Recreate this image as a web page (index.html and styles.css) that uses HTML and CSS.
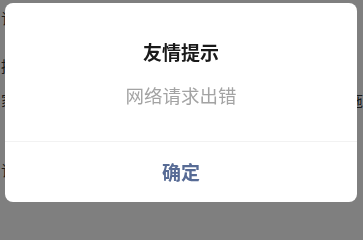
FILE: index.html
```html
<!DOCTYPE html>
<html lang="zh-CN">
<head>
<meta charset="utf-8">
<link rel="stylesheet" href="styles.css">
</head>
<body>
<div class="page">
  <div class="row r1"><span>订单</span></div>
  <div class="row r2"><span>提交</span></div>
  <div class="row r3"><span>家居</span><span class="right">拖</span></div>
  <div class="row r4"><span>订单</span></div>
</div>
<div class="mask"></div>
<div class="dialog">
  <div class="dialog-body">
    <div class="dialog-title">友情提示</div>
    <div class="dialog-msg">网络请求出错</div>
  </div>
  <div class="dialog-foot">
    <button class="dialog-btn">确定</button>
  </div>
</div>
</body>
</html>
```
FILE: styles.css
```css
html, body {
  margin: 0;
  padding: 0;
  width: 363px;
  height: 209px;
  overflow: hidden;
  background: #fff;
  font-family: "Noto Sans CJK SC", "Noto Sans", sans-serif;
}
.page {
  display: flex;
  flex-direction: column;
  padding-left: 1px;
  color: #333;
  font-size: 15px;
  line-height: 15px;
}
.row {
  display: flex;
  justify-content: space-between;
}
.r1 { margin-top: 10px; }
.r2 { margin-top: 33px; }
.r3 { margin-top: 19px; }
.r4 { margin-top: 55px; }
.mask {
  position: fixed;
  inset: 0;
  background: rgba(0, 0, 0, 0.5);
}
.dialog {
  position: fixed;
  left: 5px;
  top: 3px;
  width: 352px;
  height: 199px;
  background: #fff;
  border-radius: 8px;
  display: flex;
  flex-direction: column;
  overflow: hidden;
}
.dialog-body {
  height: 139px;
  box-sizing: border-box;
  padding-top: 37px;
  display: flex;
  flex-direction: column;
  align-items: center;
  border-bottom: 1px solid #f2f2f2;
}
.dialog-title {
  font-size: 19px;
  line-height: 24px;
  font-weight: 700;
  color: #1a1a1a;
}
.dialog-msg {
  margin-top: 19px;
  font-size: 18.5px;
  line-height: 24px;
  color: #a3a3a3;
}
.dialog-foot {
  flex: 1;
  display: flex;
}
.dialog-btn {
  flex: 1;
  border: 0;
  background: transparent;
  font-family: inherit;
  font-size: 19px;
  line-height: 24px;
  font-weight: 700;
  color: #576b95;
  padding: 0;
}
```
